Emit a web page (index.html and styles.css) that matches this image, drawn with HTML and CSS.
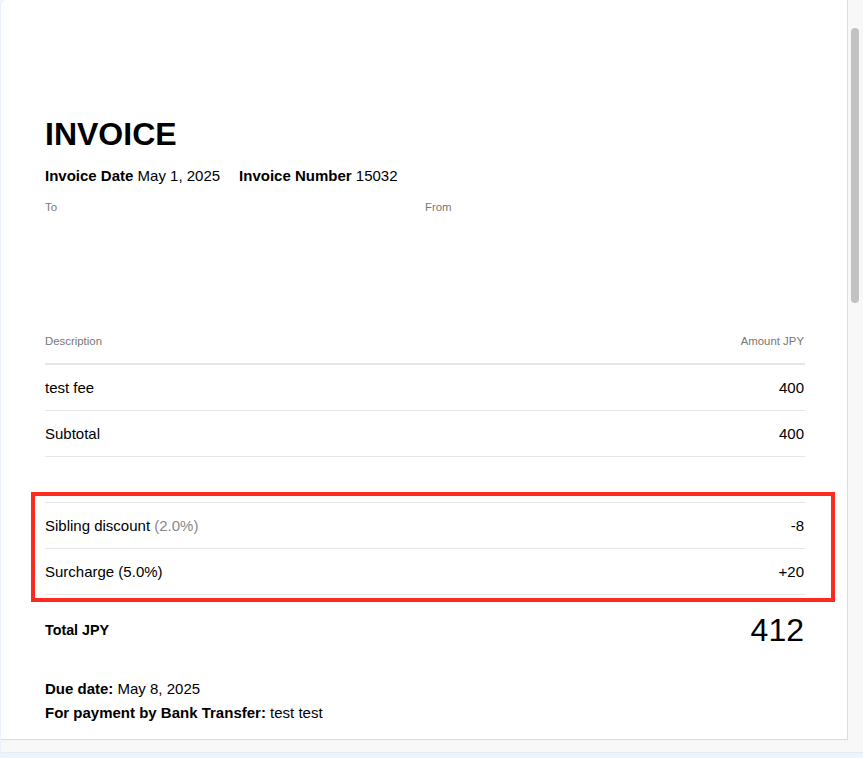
FILE: index.html
```html
<!DOCTYPE html>
<html lang="en">
<head>
<meta charset="utf-8">
<title>Invoice</title>
<link rel="stylesheet" href="styles.css">
</head>
<body>
<div class="frame">
  <div class="doc">
    <h1 class="title">INVOICE</h1>
    <div class="meta">
      <span><b>Invoice Date</b> May 1, 2025</span>
      <span><b>Invoice Number</b> 15032</span>
    </div>
    <div class="parties">
      <div class="party"><div class="label">To</div></div>
      <div class="party"><div class="label">From</div></div>
    </div>
    <div class="thead">
      <span>Description</span>
      <span>Amount JPY</span>
    </div>
    <div class="row"><span>test fee</span><span>400</span></div>
    <div class="row"><span>Subtotal</span><span>400</span></div>
    <div class="highlight">
      <div class="adjustments">
        <div class="row"><span>Sibling discount <span class="muted">(2.0%)</span></span><span>-8</span></div>
        <div class="row"><span>Surcharge (5.0%)</span><span>+20</span></div>
      </div>
    </div>
    <div class="total">
      <span class="total-label">Total JPY</span>
      <span class="total-value">412</span>
    </div>
    <div class="notes">
      <div><b>Due date:</b> May 8, 2025</div>
      <div><b>For payment by Bank Transfer:</b> test test</div>
    </div>
  </div>
  <div class="scrollbar"><div class="thumb"></div></div>
</div>
</body>
</html>
```

FILE: styles.css
```css
* { box-sizing: border-box; }
html, body { margin: 0; padding: 0; }
body {
  background: #edf3fb;
  font-family: "Liberation Sans", Arial, Helvetica, sans-serif;
  color: #000;
  width: 863px;
  height: 758px;
  overflow: hidden;
}
.frame {
  margin-left: 1px;
  height: 753px;
  background: #f8f8f8;
  border-top-left-radius: 6px;
  border-bottom: 1px solid #e6ebf2;
  overflow: hidden;
  display: flex;
}
.doc {
  width: 847px;
  height: 740px;
  flex: none;
  background: #fff;
  border-right: 1px solid #dcdcdc;
  border-bottom: 1px solid #dcdcdc;
  padding: 118px 42px 0 44px;
  overflow: hidden;
}
.title {
  margin: 0;
  font-size: 32px;
  line-height: 32px;
  font-weight: 700;
}
.meta {
  margin-top: 16px;
  font-size: 15px;
  line-height: 20px;
  display: flex;
  gap: 19px;
}
.meta b { font-weight: 700; }
.parties {
  margin-top: 14px;
  display: grid;
  grid-template-columns: 1fr 1fr;
  height: 134px;
}
.label {
  font-size: 11.4px;
  line-height: 14px;
  color: #777;
}
.thead {
  display: flex;
  justify-content: space-between;
  font-size: 11.4px;
  line-height: 14px;
  color: #777;
  padding-bottom: 15px;
  padding-right: 1px;
  border-bottom: 2px solid #e6e6e6;
}
.row {
  display: flex;
  justify-content: space-between;
  font-size: 15px;
  line-height: 18px;
  padding: 14px 1px 13px 0;
  border-bottom: 1px solid #e6e6e6;
}
.muted { color: #888; }
.highlight {
  margin: 35px -30px 0 -14px;
  border: 4px solid #ff2a1f;
  padding: 6px 26px 3px 10px;
}
.adjustments {
  border-top: 1px solid #e6e6e6;
}
.total {
  margin-top: 10px;
  height: 36px;
  padding-right: 1px;
  display: flex;
  justify-content: space-between;
  align-items: center;
}
.total-label {
  font-size: 14.3px;
  font-weight: 700;
}
.total-value {
  font-size: 32px;
  line-height: 36px;
}
.notes {
  margin-top: 29px;
  font-size: 15px;
  line-height: 24px;
}
.scrollbar {
  flex: 1;
  padding: 28px 3px 0 3px;
}
.thumb {
  width: 8px;
  height: 275px;
  border-radius: 4px;
  background: #c2c2c2;
}
```
